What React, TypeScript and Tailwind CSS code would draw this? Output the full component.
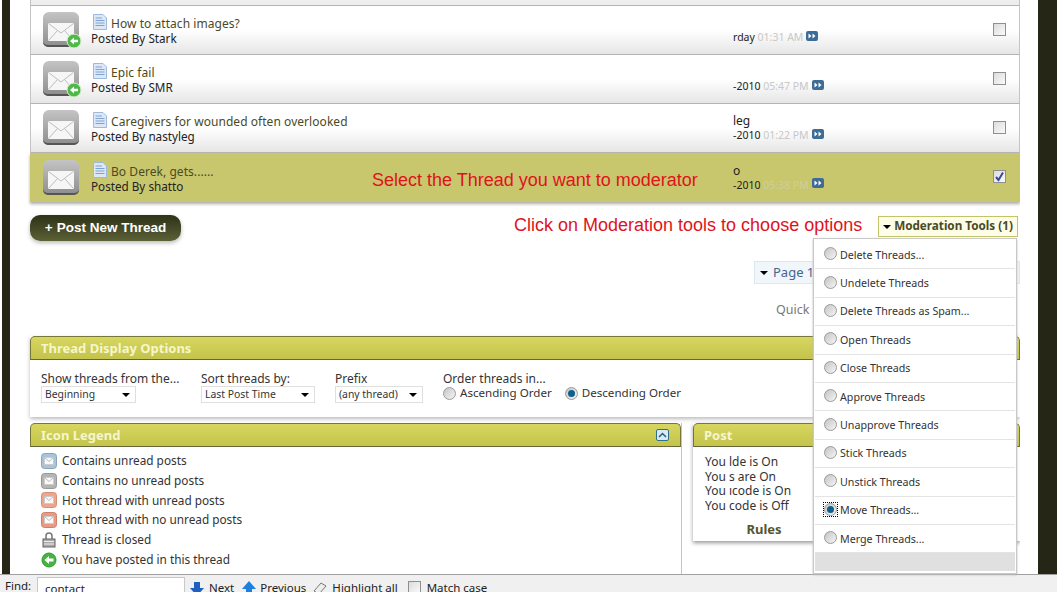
import React from "react";

const font = { fontFamily: '"Noto Sans", "Open Sans", sans-serif' };

function Mail({ badge }: { badge?: boolean }) {
  return (
    <svg width="40" height="38" viewBox="0 0 40 38" className="shrink-0">
      <defs>
        <linearGradient id="mg" x1="0" y1="0" x2="0" y2="1">
          <stop offset="0" stopColor="#c4c4c4" />
          <stop offset="0.6" stopColor="#a2a2a2" />
          <stop offset="1" stopColor="#8c8c8c" />
        </linearGradient>
      </defs>
      <rect x="1" y="1" width="36" height="35" rx="6" fill="url(#mg)" />
      <path d="M1 30 v1 a5 5 0 0 0 5 5 h26 a5 5 0 0 0 5 -5 v-1 a5 5 0 0 1 -5 4 h-26 a5 5 0 0 1 -5 -4z" fill="#555" />
      <rect x="6" y="12" width="26" height="18" rx="1" fill="#f6f6f6" />
      <path d="M6.5 12.5 L19 22 L31.5 12.5 M6.5 29.5 L15.5 19.5 M31.5 29.5 L22.5 19.5" fill="none" stroke="#bdbdbd" strokeWidth="1" />
      {badge && (
        <g>
          <circle cx="32" cy="30" r="7" fill="#4eb848" stroke="#d8f0d0" strokeWidth="1" />
          <path d="M28 30 L32 26.5 V28.7 H36 V31.3 H32 V33.5Z" fill="#fff" />
        </g>
      )}
    </svg>
  );
}

function Doc() {
  return (
    <svg width="14" height="16" viewBox="0 0 14 16" className="shrink-0">
      <path d="M0.5 0.5 H10 L13.5 4 V15.5 H0.5Z" fill="#dce8f8" stroke="#9db9dc" />
      <path d="M2.5 4 H9 M2.5 6.5 H11.5 M2.5 9 H11.5 M2.5 11.5 H11.5" stroke="#7fa3d0" strokeWidth="1" />
    </svg>
  );
}

function GoLast() {
  return (
    <svg width="12" height="10" viewBox="0 0 12 10" className="shrink-0 relative -top-[2px]">
      <rect width="12" height="10" rx="2" fill="#3d6d96" />
      <path d="M2.5 2.5 L5.5 5 L2.5 7.5Z M6.5 2.5 L9.5 5 L6.5 7.5Z" fill="#fff" />
    </svg>
  );
}

function Check({ on }: { on?: boolean }) {
  return (
    <div className="w-[13px] h-[13px] shrink-0 border border-[#8f8f8f] bg-gradient-to-br from-[#dcdcdc] to-[#fafafa] flex items-center justify-center">
      {on && (
        <svg width="11" height="11" viewBox="0 0 11 11">
          <path d="M2 6 L4.5 9 L9 1.5" fill="none" stroke="#3a4a9a" strokeWidth="2" />
        </svg>
      )}
    </div>
  );
}

function Radio({ on, focus }: { on?: boolean; focus?: boolean }) {
  return (
    <div className={"w-[13px] h-[13px] shrink-0 flex items-center justify-center" + (focus ? " outline-1 outline-dotted outline-black" : "")}>
      <div className="w-[13px] h-[13px] rounded-full border border-[#9a9a9a] bg-gradient-to-br from-[#c4c4c4] to-[#f6f6f6] flex items-center justify-center">
        {on && <div className="w-[7px] h-[7px] rounded-full bg-[#0f5f8f]" />}
      </div>
    </div>
  );
}

function Caret() {
  return <span className="w-0 h-0 border-x-[4px] border-x-transparent border-t-[4px] border-t-black shrink-0" />;
}

function Select({ w, label }: { w: string; label: string }) {
  return (
    <div className={"h-[17px] border border-[#dfdfdf] bg-white flex items-center justify-between pl-[3px] pr-[5px] text-[10.4px] text-[#333] leading-none " + w}>
      <span>{label}</span>
      <Caret />
    </div>
  );
}

const rows = [
  { t: "How to attach images?", by: "Stark", l1: "", l2: "rday", time: "01:31 AM", badge: true },
  { t: "Epic fail", by: "SMR", l1: "", l2: "-2010", time: "05:47 PM", badge: true },
  { t: "Caregivers for wounded often overlooked", by: "nastyleg", l1: "leg", l2: "-2010", time: "01:22 PM" },
  { t: "Bo Derek, gets......", by: "shatto", l1: "o", l2: "-2010", time: "05:38 PM", sel: true },
];

function Row({ r }: { r: (typeof rows)[number] }) {
  return (
    <div
      className={
        "h-[49px] flex items-center pl-[11px] pr-[13px] border-l border-r " +
        (r.sel
          ? "bg-[#c8c76e] border-[#c8c76e] shadow-[0_2px_3px_#aaa]"
          : "bg-gradient-to-b from-white from-50% to-[#e6e6e6] border-[#c4c4c4] border-b border-b-[#b4b4b4]")
      }
    >
      <Mail badge={r.badge} />
      <div className="ml-[9px] w-[642px] shrink-0 text-[12px] leading-[15px] -mt-[2px]">
        <div className="flex items-end gap-[4px] h-[18px] pl-[2px]">
          <Doc />
          <span className="text-[#4b4a22] relative top-[1px] tracking-[0.05px]">{r.t}</span>
        </div>
        <div className="text-[#222] mt-[1px] text-[11.7px]">Posted By {r.by}</div>
      </div>
      <div className="flex-1 text-[10.5px] leading-[15px] text-[#222]">
        <div className="h-[15px] text-[12px]">{r.l1}</div>
        <div className="flex items-center gap-[3px]">
          <span>
            {r.l2}{" "}
            <span className={r.sel ? "text-[#cfcf9a]" : "text-[#c8c8c8]"}>{r.time}</span>
          </span>
          <GoLast />
        </div>
      </div>
      <div className="relative -top-[1px]">
        <Check on={r.sel} />
      </div>
    </div>
  );
}

function PanelHead({ title, right }: { title: string; right?: React.ReactNode }) {
  return (
    <div className="h-[24px] rounded-t-[5px] border border-[#77773a] border-b-[#66663a] bg-gradient-to-b from-[#d6d660] to-[#c4c44c] flex items-center justify-between pl-[10px] pr-[11px]">
      <span className="text-[13px] font-bold text-[#f6f6cc] relative top-[1px]">{title}</span>
      {right}
    </div>
  );
}

function LegendIcon({ c, d }: { c: string; d: string }) {
  return (
    <svg width="16" height="16" viewBox="0 0 16 16" className="shrink-0">
      <rect x="0.5" y="0.5" width="15" height="15" rx="3" fill={c} stroke={d} />
      <rect x="3.5" y="4.5" width="9" height="7" fill="#fafafa" stroke="#ccc" />
      <path d="M3.5 4.5 L8 8.5 L12.5 4.5" fill="none" stroke="#bbb" />
    </svg>
  );
}

const legend = [
  { k: "a", t: "Contains unread posts", i: <LegendIcon c="#a9c3d8" d="#8aa5ba" /> },
  { k: "b", t: "Contains no unread posts", i: <LegendIcon c="#b4b4b4" d="#999" /> },
  { k: "c", t: "Hot thread with unread posts", i: <LegendIcon c="#eda58c" d="#d88f76" /> },
  { k: "d", t: "Hot thread with no unread posts", i: <LegendIcon c="#e89a82" d="#cf8069" /> },
  {
    k: "e",
    t: "Thread is closed",
    i: (
      <svg width="16" height="16" viewBox="0 0 16 16" className="shrink-0">
        <path d="M5 7 V4 a3 3 0 0 1 6 0 V7" fill="none" stroke="#777" strokeWidth="1.5" />
        <rect x="2" y="7" width="12" height="8" fill="#aaa" stroke="#666" />
        <path d="M3 9.5 H13 M3 12 H13" stroke="#eee" />
      </svg>
    ),
  },
  {
    k: "f",
    t: "You have posted in this thread",
    i: (
      <svg width="16" height="16" viewBox="0 0 16 16" className="shrink-0">
        <circle cx="8" cy="8" r="7" fill="#46b440" stroke="#2f9a2c" />
        <path d="M3.5 8 L8 4 V6.5 H12.5 V9.5 H8 V12Z" fill="#fff" />
      </svg>
    ),
  },
];

const tools = [
  "Delete Threads...",
  "Undelete Threads",
  "Delete Threads as Spam...",
  "Open Threads",
  "Close Threads",
  "Approve Threads",
  "Unapprove Threads",
  "Stick Threads",
  "Unstick Threads",
  "Move Threads...",
  "Merge Threads...",
];

export default function App() {
  return (
    <div className="relative w-[1057px] h-[592px] overflow-hidden bg-white flex flex-col" style={font}>
      <div className="h-[574px] flex overflow-hidden">
        <div className="w-[2px] shrink-0 bg-white" />
        <div className="w-[8px] shrink-0 bg-[#262616]" />
        <div className="w-[20px] shrink-0 bg-white" />
        <div className="w-[990px] shrink-0">
          <div className="h-[6px] bg-[#eeeeee] border-b border-[#b4b4b4] border-x border-x-[#c4c4c4]" />
          {rows.map((r) => (
            <Row key={r.t} r={r} />
          ))}

          <div className="mt-[13px] flex items-start justify-between pr-[2px]">
            <div className="w-[151px] h-[26px] rounded-[10px] bg-gradient-to-b from-[#2e3218] to-[#5c6136] shadow-[0_2px_4px_#bbb] flex items-center justify-center text-[13.5px] font-semibold text-white" style={{ fontFamily: '"Liberation Sans", sans-serif' }}>
              <span>
                <span className="mr-[4px] font-bold">+</span>Post New Thread
              </span>
            </div>
            <div className="mt-[1px] w-[140px] h-[21px] border border-[#c3c36a] bg-[#fdfde8] flex items-center justify-center gap-[3px] text-[11.7px] font-bold text-[#4a4a26]">
              <Caret />
              <span className="relative -top-[1px]">Moderation Tools (1)</span>
            </div>
          </div>

          <div className="mt-[20px] flex justify-end">
            <div className="w-[266px] h-[23px] border border-[#dce8f0] bg-[#f0f6fa] flex items-center pl-[5px] gap-[5px] text-[13px] text-[#45658c]">
              <Caret />
              <span>Page 1</span>
            </div>
          </div>

          <div className="mt-[17px] h-[18px] flex justify-end">
            <div className="w-[244px] text-[12.5px] leading-[18px] text-[#777]">Quick Navigation</div>
          </div>

          <div className="mt-[17px] shadow-[0_2px_4px_#bbb]">
            <PanelHead title="Thread Display Options" />
            <div className="h-[57px] bg-white pl-[11px] pt-[12px] flex text-[12px] leading-[14px] text-[#333]">
              <div className="w-[160px]">
                <div>Show threads from the...</div>
                <Select w="w-[95px]" label="Beginning" />
              </div>
              <div className="w-[134px]">
                <div>Sort threads by:</div>
                <Select w="w-[114px]" label="Last Post Time" />
              </div>
              <div className="w-[108px]">
                <div>Prefix</div>
                <Select w="w-[88px]" label="(any thread)" />
              </div>
              <div>
                <div>Order threads in...</div>
                <div className="flex items-center text-[11.6px]">
                  <Radio />
                  <span className="ml-[4px] mr-[13px]">Ascending Order</span>
                  <Radio on />
                  <span className="ml-[4px]">Descending Order</span>
                </div>
              </div>
            </div>
          </div>

          <div className="mt-[6px] flex gap-[11px] items-start">
            <div className="w-[652px] shrink-0 border-r border-[#c4c4c4] h-[160px]">
              <PanelHead
                title="Icon Legend"
                right={
                  <div className="w-[13px] h-[12px] rounded-[2px] border border-[#2f6f8f] bg-[#d8eaf4] flex items-center justify-center">
                    <svg width="9" height="6" viewBox="0 0 9 6">
                      <path d="M1 5 L4.5 1.5 L8 5" fill="none" stroke="#2a5f80" strokeWidth="1.5" />
                    </svg>
                  </div>
                }
              />
              <div className="pl-[11px] pt-[4px] text-[11.8px] text-[#333]">
                {legend.map((l) => (
                  <div key={l.k} className="h-[19.8px] flex items-center gap-[5px]">
                    {l.i}
                    <span>{l.t}</span>
                  </div>
                ))}
              </div>
            </div>
            <div className="flex-1 shadow-[0_2px_4px_#999]">
              <PanelHead title="Post" />
              <div className="h-[94px] bg-white pl-[12px] pt-[8px] text-[12px] leading-[14.7px] text-[#333]">
                <div>You lde is On</div>
                <div>You s are On</div>
                <div>You ıcode is On</div>
                <div>You code is Off</div>
                <div className="w-[118px] mt-[8px] text-center font-bold text-[13px] text-[#55552e]">Rules</div>
              </div>
            </div>
          </div>
        </div>
        <div className="w-[18px] shrink-0 bg-white" />
        <div className="flex-1 bg-[#262616]" />
      </div>

      <div className="h-[18px] bg-[#f0f0f0] border-t border-[#a0a0a0] flex items-start pl-[5px] text-[11.5px] text-[#222] leading-[20px] overflow-hidden">
        <span className="w-[32px] mt-[1px]">Find:</span>
        <div className="w-[148px] h-[20px] mt-[2px] border border-[#c8c8c8] bg-white pl-[7px] leading-[20px] pt-[1px]">contact</div>
        <svg width="14" height="16" viewBox="0 0 14 16" className="ml-[5px] mt-[7px] shrink-0">
          <path d="M4 0 H10 V6 H14 L7 14 L0 6 H4Z" fill="#1f5fbf" />
        </svg>
        <span className="ml-[5px] mt-[3px]">Next</span>
        <svg width="14" height="16" viewBox="0 0 14 16" className="ml-[8px] mt-[6px] shrink-0">
          <path d="M4 14 H10 V8 H14 L7 0 L0 8 H4Z" fill="#1f7fdf" />
        </svg>
        <span className="ml-[4px] mt-[3px]">Previous</span>
        <svg width="14" height="14" viewBox="0 0 14 14" className="ml-[7px] mt-[6px] shrink-0">
          <path d="M1 10 L8 2 L13 5 L6 13Z" fill="#eee" stroke="#777" />
        </svg>
        <span className="ml-[5px] mt-[3px]">Highlight all</span>
        <div className="ml-[10px] mt-[6px] w-[13px] h-[13px] border border-[#8f8f8f] bg-gradient-to-br from-[#dcdcdc] to-[#fafafa] shrink-0" />
        <span className="ml-[6px] mt-[3px]">Match case</span>
      </div>

      <div className="absolute left-[372px] top-[169px] text-[18px] leading-[22px] text-[#e0121c] whitespace-nowrap" style={{ fontFamily: '"Liberation Sans", sans-serif' }}>
        Select the Thread you want to moderator
      </div>
      <div className="absolute left-[514px] top-[214px] text-[18px] leading-[22px] text-[#e0121c] whitespace-nowrap" style={{ fontFamily: '"Liberation Sans", sans-serif' }}>
        Click on Moderation tools to choose options
      </div>

      <div className="absolute left-[813px] top-[238px] w-[204px] h-[336px] border border-[#c8c8c8] bg-white px-[1px] pt-[2px] overflow-hidden shadow-[0_1px_2px_#bbb]">
        {tools.map((t, i) => (
          <div key={t} className="h-[28.4px] border-b border-[#e4e4e4] last:border-b-0 flex items-center pl-[9px] gap-[3px] text-[10.7px] text-[#333]">
            <div className="relative -top-[1px]">
              <Radio on={i === 9} focus={i === 9} />
            </div>
            <span>{t}</span>
          </div>
        ))}
        <div className="h-[18px] bg-[#e0e0e0]" />
      </div>
    </div>
  );
}
